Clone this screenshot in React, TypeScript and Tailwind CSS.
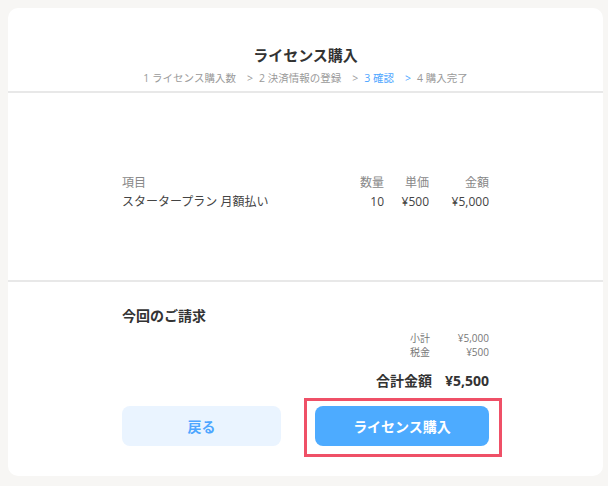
export default function App() {
  const font = { fontFamily: '"Open Sans", "Noto Sans CJK JP", sans-serif' };
  return (
    // page background
    <div className="w-[608px] h-[486px] bg-[#f7f6f4] p-2" style={font}>
      <div className="flex flex-col w-[595px] h-[468px] bg-white rounded-[10px] overflow-hidden">
        {/* title + steps */}
        <div className="flex flex-col items-center h-[85px] pt-[37px] border-b-2 border-[#e8e8e8]">
          <p className="text-[15px] leading-[20px] font-bold text-[#333]">ライセンス購入</p>
          <div className="flex items-center mt-[6px] text-[10.5px] leading-[14px] text-[#9a9a9a]">
            <span>1 ライセンス購入数</span>
            <span className="pl-[11px] pr-[6px]">&gt;</span>
            <span>2 決済情報の登録</span>
            <span className="pl-[11px] pr-[6px]">&gt;</span>
            <span className="text-[#4da6ff]">3 確認</span>
            <span className="pl-[11px] pr-[6px] text-[#4da6ff]">&gt;</span>
            <span>4 購入完了</span>
          </div>
        </div>

        {/* items table */}
        <div className="h-[189px] pt-[80px] px-[114px] border-b-2 border-[#e8e8e8] bg-white">
          <div className="grid grid-cols-[1fr_auto_45px_60px] text-[12px] leading-[19px]">
            <span className="text-[#888]">項目</span>
            <span className="text-right text-[#888]">数量</span>
            <span className="text-right text-[#888]">単価</span>
            <span className="text-right text-[#888]">金額</span>
            <span className="text-[#444]">スタータープラン 月額払い</span>
            <span className="text-right text-[#444]">10</span>
            <span className="text-right text-[#444]">¥500</span>
            <span className="text-right text-[#444]">¥5,000</span>
          </div>
        </div>

        {/* billing summary */}
        <div className="flex flex-col px-[114px] pt-[24px]">
          <p className="text-[14px] leading-[20px] font-bold text-[#333]">今回のご請求</p>
          <div className="self-end grid grid-cols-[auto_59px] mt-[5px] text-[10px] leading-[14px] text-[#777]">
            <span>小計</span>
            <span className="text-right">¥5,000</span>
            <span>税金</span>
            <span className="text-right">¥500</span>
          </div>
          <div className="self-end flex gap-[13px] mt-[12px] text-[14px] leading-[20px] font-bold text-[#333]">
            <span>合計金額</span>
            <span>¥5,500</span>
          </div>
          <div className="flex justify-between mt-[15px]">
            <button className="w-[159px] h-[40px] rounded-[8px] bg-[#eaf4ff] text-[14px] font-bold text-[#4da6ff]">
              戻る
            </button>
            <div className="relative">
              <button className="w-[174px] h-[40px] rounded-[8px] bg-[#4dabff] text-[14px] font-bold text-white">
                ライセンス購入
              </button>
              {/* highlight frame */}
              <div className="absolute left-[-11px] top-[-8px] right-[-13px] bottom-[-11px] border-[3px] border-[#ef5067] pointer-events-none" />
            </div>
          </div>
        </div>
      </div>
    </div>
  );
}
